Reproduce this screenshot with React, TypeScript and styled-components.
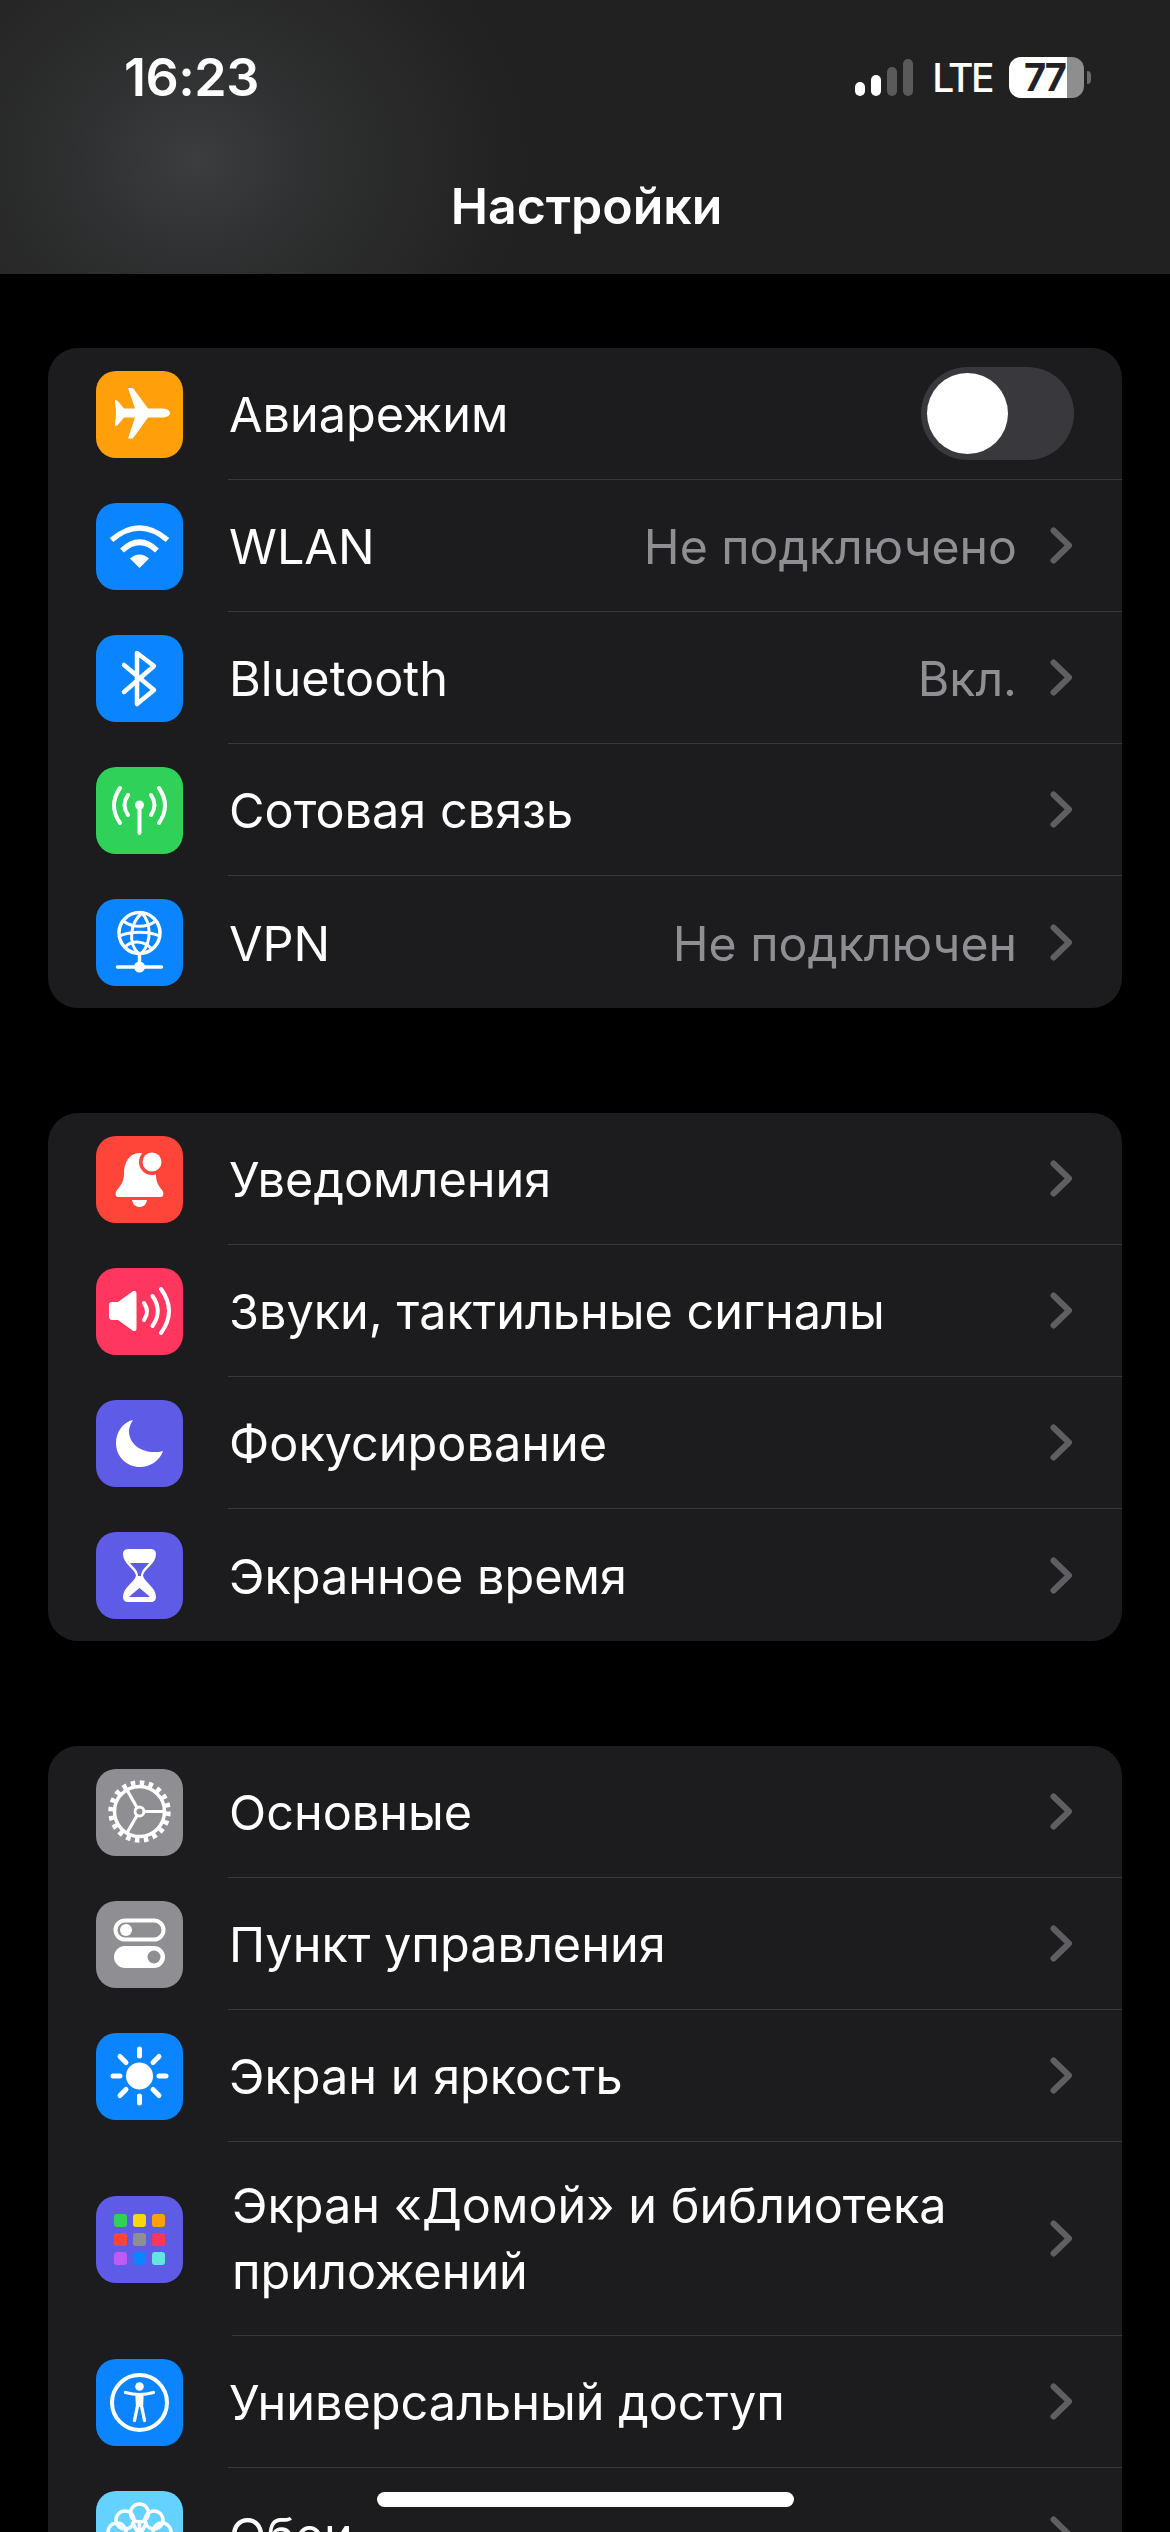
import React from 'react';
import styled, { createGlobalStyle } from 'styled-components';

const GlobalStyle = createGlobalStyle`
  html, body {
    margin: 0;
    padding: 0;
    width: 1170px;
    height: 2532px;
    overflow: hidden;
    background: #000;
  }
`;

const Screen = styled.div`
  position: relative;
  width: 1170px;
  height: 2532px;
  overflow: hidden;
  background: #000;
  color: #fff;
  font-family: 'Inter', 'Noto Sans', sans-serif;
`;

const Header = styled.header`
  height: 274px;
  box-sizing: border-box;
  padding: 57px 79px 0 124px;
  background:
    radial-gradient(ellipse 330px 280px at 195px 160px, #3b3d3e 0%, rgba(50, 51, 52, 0.75) 40%, rgba(34, 34, 34, 0) 100%),
    #212121;
`;

const StatusBar = styled.div`
  height: 41px;
  display: flex;
  align-items: center;
  justify-content: space-between;
`;

const Clock = styled.span`
  font-size: 52px;
  font-weight: 600;
  letter-spacing: -0.5px;
`;

const StatusRight = styled.div`
  display: flex;
  align-items: center;
`;

const Signal = styled.div`
  display: flex;
  align-items: flex-end;
  gap: 6px;
  height: 37px;
  margin-right: 19px;
`;

const SignalBar = styled.i<{ $h: number; $on?: boolean }>`
  display: block;
  width: 10px;
  height: ${(p) => p.$h}px;
  border-radius: 5px;
  background: ${(p) => (p.$on ? '#fff' : '#5a5a5a')};
`;

const Lte = styled.span`
  font-size: 39px;
  font-weight: 500;
  letter-spacing: -2.5px;
  margin-right: 17px;
`;

const Battery = styled.div`
  width: 75px;
  height: 41px;
  border-radius: 12px;
  background: linear-gradient(90deg, #fff 0, #fff 58px, #8e8e8e 58px);
  color: #222;
  font-size: 38px;
  font-weight: 700;
  letter-spacing: -2px;
  line-height: 41px;
  padding-left: 15px;
  box-sizing: border-box;
`;

const BatteryCap = styled.i`
  display: block;
  width: 4px;
  height: 13px;
  margin-left: 3px;
  border-radius: 0 4px 4px 0;
  background: #6a6a6a;
`;

const Title = styled.h1`
  margin: 78px 0 0 -42px;
  font-size: 50px;
  font-weight: 600;
  line-height: 60px;
  text-align: center;
`;

const Content = styled.main`
  padding: 74px 48px 0;
  display: flex;
  flex-direction: column;
  gap: 105px;
`;

const Card = styled.section`
  background: #1c1c1e;
  border-radius: 30px;
  overflow: hidden;
`;

const Row = styled.div`
  display: flex;
  padding-left: 48px;
`;

const IconBox = styled.div<{ $bg: string }>`
  flex: none;
  align-self: center;
  width: 87px;
  height: 87px;
  border-radius: 20px;
  background: ${(p) => p.$bg};
  svg {
    display: block;
  }
`;

const RowBody = styled.div<{ $inset?: boolean; $tall?: boolean; $last?: boolean }>`
  flex: 1;
  min-width: 0;
  box-sizing: border-box;
  height: ${(p) => (p.$tall ? 194 : 132)}px;
  margin-left: ${(p) => (p.$inset ? 49 : 45)}px;
  padding-right: 49px;
  display: flex;
  align-items: center;
  border-bottom: ${(p) => (p.$last ? 'none' : '1px solid #38383a')};
`;

const Label = styled.span<{ $tall?: boolean }>`
  flex: 1;
  font-size: 48.6px;
  font-weight: 400;
  line-height: 66px;
  white-space: pre-line;
  padding-left: ${(p) => (p.$tall ? 0 : 1)}px;
  padding-top: ${(p) => (p.$tall ? 0 : 3)}px;
`;

const Value = styled.span`
  font-size: 48.2px;
  line-height: 66px;
  padding-top: 3px;
  color: #8e8e93;
  margin-right: 33px;
`;

const Toggle = styled.div`
  width: 153px;
  height: 93px;
  margin-right: -1px;
  box-sizing: border-box;
  padding: 6px;
  border-radius: 47px;
  background: #39393d;
`;

const Knob = styled.div`
  width: 81px;
  height: 81px;
  border-radius: 50%;
  background: #fff;
`;

const HomeIndicator = styled.div`
  position: absolute;
  left: 377px;
  bottom: 25px;
  width: 417px;
  height: 15px;
  border-radius: 8px;
  background: #fff;
`;

const Chevron = () => (
  <svg width="23" height="37" viewBox="0 0 23 37" fill="none">
    <path d="M3.5 3.5 L19 18.5 L3.5 33.5" stroke="#5f5f63" strokeWidth="6" strokeLinecap="round" strokeLinejoin="round" />
  </svg>
);

const Glyph = ({ children }: { children: React.ReactNode }) => (
  <svg width="87" height="87" viewBox="0 0 87 87" fill="none" stroke="none">
    {children}
  </svg>
);

const lines = { stroke: '#fff', strokeLinecap: 'round' as const, strokeLinejoin: 'round' as const, fill: 'none' };

const icons: Record<string, React.ReactNode> = {
  plane: (
    <path fill="#fff" d="M74 42c0 3-4 4.500-8 4.500H52L38 66c-.7 1-1.500 1.500-3 1.500h-3l7-21H28l-5 6c-1 1.500-2 2.500-4 2.500L20 42l-1-13c2 0 3 1 4 2.500l5 6h11l-7-20.500h3c1.500 0 2.300.5 3 1.500l14 19h14c4 0 8 1.500 8 4.500z" />
  ),
  wifi: (
    <>
      <path {...lines} strokeWidth="5.500" strokeLinecap="butt" d="M15.500 37Q43.500 13 71.500 37" />
      <path {...lines} strokeWidth="5.500" strokeLinecap="butt" d="M26 47.500Q43.500 31 61 47.500" />
      <path fill="#fff" d="M43.500 65L34 55.500Q43.500 47.500 53 55.500z" />
    </>
  ),
  bluetooth: (
    <path {...lines} strokeWidth="4.500" d="M28 30L58 55L41 69V18L58 31L28 57" />
  ),
  cell: (
    <>
      <circle cx="43.500" cy="38" r="4.500" fill="#fff" />
      <path {...lines} strokeWidth="4" d="M43.500 38V66" />
      <path {...lines} strokeWidth="4" d="M24 21Q12 38.500 24 56M32 28Q25 38 32 48M63 21Q75 38.500 63 56M55 28Q62 38 55 48" />
    </>
  ),
  globe: (
    <>
      <circle {...lines} cx="43.500" cy="34" r="20.500" strokeWidth="3.500" />
      <path {...lines} strokeWidth="3" d="M46 14C34 24 32 44 42 54M46 14C55 24 56 42 46 54M27 22C37 29 50 29 60 22M23.500 37C34 32 53 32 63.500 37M29 48C36 41 47 41 56 50" />
      <path {...lines} strokeWidth="3.500" d="M43.500 55V68M21.500 68H65.500" />
      <circle cx="43.500" cy="68" r="5.500" fill="#fff" />
    </>
  ),
  bell: (
    <>
      <path fill="#fff" d="M43.500 17C33 17 28 27 28 37C28 46 25 49 21 54C19 56 19 61 22 61H65C68 61 68 56 66 54C62 49 60 46 60 38C60 28 54 17 43.500 17Z" />
      <path fill="#fff" d="M36 64H51C50 69 47 71 43.500 71C40 71 37 69 36 64Z" />
      <circle cx="56" cy="26" r="13" fill="#ff453a" />
      <circle cx="56" cy="26" r="9.500" fill="#fff" />
    </>
  ),
  sound: (
    <>
      <path fill="#fff" d="M16 34H22L36.500 23.500C38.500 22 40.500 23 40.500 25.500V60.500C40.500 63 38.500 64 36.500 62.500L22 52H16C14 52 13 51 13 49V37C13 35 14 34 16 34Z" />
      <path {...lines} strokeWidth="4" d="M48 35Q54 43.500 48 52M56.500 28Q67 43 56.500 58M65 21Q81 43 65 65" />
    </>
  ),
  moon: (
    <path fill="#fff" d="M37 20C27 22 20 32 20 43C20 57 31 67 44 67C55 67 64 60 67 51C64 52 61 52 58 52C45 52 33 44 33 31C33 27 35 23 37 20Z" />
  ),
  hourglass: (
    <>
      <path fill="#fff" d="M27 22C27 18 30 17 33 17H54C57 17 60 18 60 22C60 32 48 37 47 43.500C48 50 60 55 60 65C60 68 58 70 55 70H32C29 70 27 68 27 65C27 55 39 50 40 43.500C39 37 27 32 27 22Z" />
      <path fill="#5e5ce6" d="M34 31H53C50 35 45 38 45 44H42C42 38 37 35 34 31ZM43.500 56C47 59 51 62 54 65H33C36 62 40 59 43.500 56Z" />
    </>
  ),
  gear: (
    <>
      <circle {...lines} cx="43.500" cy="42.500" r="25" strokeWidth="3.500" />
      <circle cx="43.500" cy="42.500" r="28" stroke="#fff" strokeWidth="6.500" strokeDasharray="4.400 4.400" />
      <circle {...lines} cx="43.500" cy="42.500" r="4.500" strokeWidth="2.800" />
      <path {...lines} strokeWidth="3.200" d="M48 42.500H68M41 38.500L31 21M41 46.500L31 64" />
    </>
  ),
  control: (
    <>
      <rect x="19.500" y="19.500" width="48" height="19" rx="9.500" stroke="#fff" strokeWidth="4" />
      <circle cx="30" cy="29" r="6" fill="#fff" />
      <rect x="18" y="45" width="51" height="22" rx="11" fill="#fff" />
      <circle cx="58" cy="56" r="6.500" fill="#8e8e93" />
    </>
  ),
  sun: (
    <>
      <circle cx="43.500" cy="43" r="13.500" fill="#fff" />
      <path {...lines} strokeWidth="5" d="M43.500 16V23M43.500 63V70M17 43H24M63 43H70M24 23.500L30 29.500M57 56.500L63 62.500M24 62.500L30 56.500M57 29.500L63 23.500" />
    </>
  ),
  home: (
    <>
      {[
        ['#30d158', 18, 18], ['#ffd60a', 37, 18], ['#ff9f0a', 56, 18],
        ['#ff453a', 18, 37], ['#8e8e93', 37, 37], ['#ff375f', 56, 37],
        ['#bf5af2', 18, 56], ['#0a84ff', 37, 56], ['#64e6e0', 56, 56],
      ].map(([c, x, y]) => (
        <rect key={`${x}-${y}`} x={x as number} y={y as number} width="13" height="13" rx="3" fill={c as string} />
      ))}
    </>
  ),
  access: (
    <>
      <circle {...lines} cx="43.500" cy="43.500" r="27.500" strokeWidth="4" />
      <circle cx="43.500" cy="27.500" r="4.300" fill="#fff" />
      <path {...lines} strokeWidth="3.300" d="M29.500 33.500C38 36 49 36 57.500 33.500M41 36L41.500 47L38.500 61.500M46 36L45.500 47L48.500 61.500" />
      <path fill="#fff" d="M41 35H46V48H41Z" />
    </>
  ),
  wallpaper: (
    <>
      <circle {...lines} cx="43.500" cy="22" r="9" strokeWidth="3.500" />
      <circle {...lines} cx="29" cy="29" r="9" strokeWidth="3.500" />
      <circle {...lines} cx="58" cy="29" r="9" strokeWidth="3.500" />
      <circle {...lines} cx="21" cy="41" r="9" strokeWidth="3.500" />
      <circle {...lines} cx="66" cy="41" r="9" strokeWidth="3.500" />
      <path {...lines} strokeWidth="3.500" d="M43.500 31V46M37 32L43.500 46M50 32L43.500 46" />
    </>
  ),
};

interface Item {
  icon: string;
  bg: string;
  label: string;
  value?: string;
  toggle?: boolean;
  tall?: boolean;
}

const groups: Item[][] = [
  [
    { icon: 'plane', bg: '#ff9f0a', label: 'Авиарежим', toggle: true },
    { icon: 'wifi', bg: '#0a84ff', label: 'WLAN', value: 'Не подключено' },
    { icon: 'bluetooth', bg: '#0a84ff', label: 'Bluetooth', value: 'Вкл.' },
    { icon: 'cell', bg: '#30d158', label: 'Сотовая связь' },
    { icon: 'globe', bg: '#0a84ff', label: 'VPN', value: 'Не подключен' },
  ],
  [
    { icon: 'bell', bg: '#ff453a', label: 'Уведомления' },
    { icon: 'sound', bg: '#ff375f', label: 'Звуки, тактильные сигналы' },
    { icon: 'moon', bg: '#5e5ce6', label: 'Фокусирование' },
    { icon: 'hourglass', bg: '#5e5ce6', label: 'Экранное время' },
  ],
  [
    { icon: 'gear', bg: '#8e8e93', label: 'Основные' },
    { icon: 'control', bg: '#8e8e93', label: 'Пункт управления' },
    { icon: 'sun', bg: '#0a84ff', label: 'Экран и яркость' },
    { icon: 'home', bg: '#5e5ce6', label: 'Экран «Домой» и библиотека\nприложений', tall: true },
    { icon: 'access', bg: '#0a84ff', label: 'Универсальный доступ' },
    { icon: 'wallpaper', bg: '#64d2ff', label: 'Обои' },
  ],
];

export default function App() {
  return (
    <Screen>
      <GlobalStyle />
      <Header>
        <StatusBar>
          <Clock>16:23</Clock>
          <StatusRight>
            <Signal>
              <SignalBar $h={14} $on />
              <SignalBar $h={21} $on />
              <SignalBar $h={29} />
              <SignalBar $h={37} />
            </Signal>
            <Lte>LTE</Lte>
            <Battery>77</Battery>
            <BatteryCap />
          </StatusRight>
        </StatusBar>
        <Title>Настройки</Title>
      </Header>
      <Content>
        {groups.map((items, g) => (
          <Card key={g}>
            {items.map((item, i) => (
              <Row key={item.label}>
                <IconBox $bg={item.bg}>
                  <Glyph>{icons[item.icon]}</Glyph>
                </IconBox>
                <RowBody $inset={item.tall} $tall={item.tall} $last={i === items.length - 1}>
                  <Label $tall={item.tall}>{item.label}</Label>
                  {item.value && <Value>{item.value}</Value>}
                  {item.toggle ? (
                    <Toggle>
                      <Knob />
                    </Toggle>
                  ) : (
                    <Chevron />
                  )}
                </RowBody>
              </Row>
            ))}
          </Card>
        ))}
      </Content>
      <HomeIndicator />
    </Screen>
  );
}
